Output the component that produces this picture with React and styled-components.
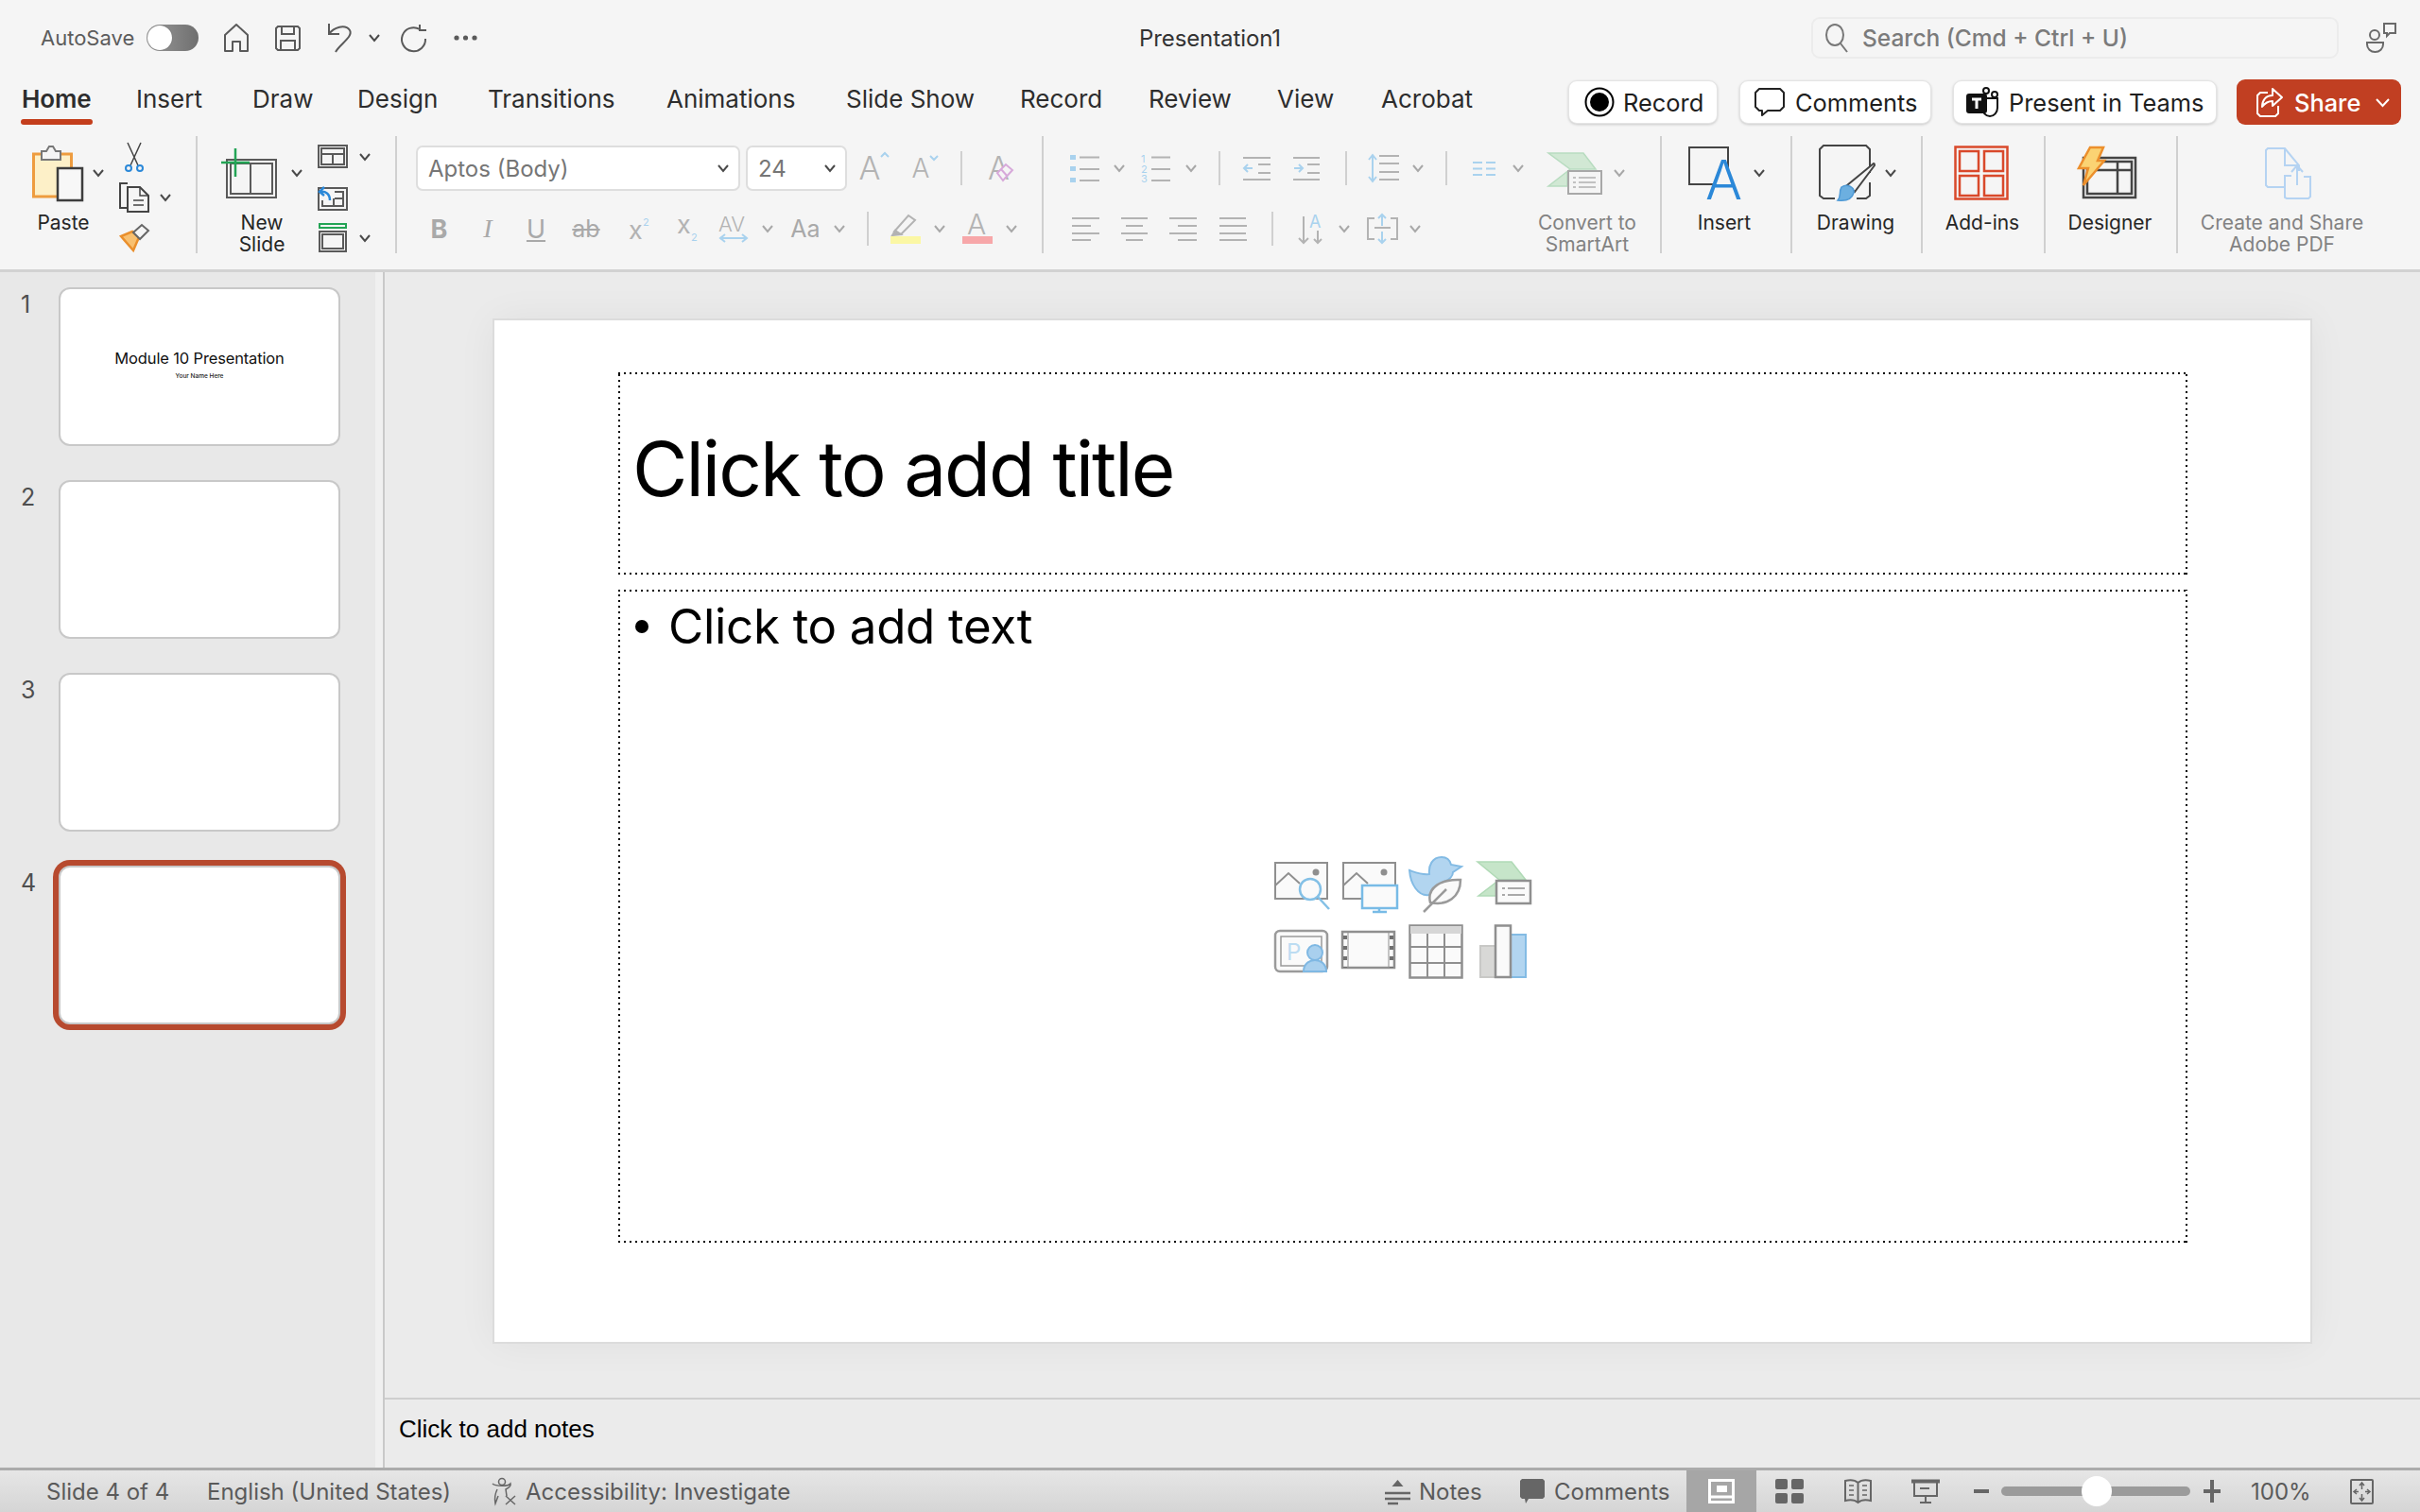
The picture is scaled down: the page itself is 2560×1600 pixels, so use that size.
import React from 'react';
import styled, { createGlobalStyle } from 'styled-components';

const GlobalStyle = createGlobalStyle`
  html, body { margin: 0; padding: 0; background: #ebebeb; }
  * { box-sizing: border-box; }
  body { font-family: Inter, "Liberation Sans", sans-serif; }
`;

const Page = styled.div`
  width: 2560px;
  height: 1600px;
  display: flex;
  flex-direction: column;
  overflow: hidden;
  background: #ebebeb;
`;

/* ---------- top bars ---------- */
const TitleBar = styled.header`
  height: 80px;
  display: grid;
  grid-template-columns: 1fr auto 1fr;
  align-items: center;
  background: #f5f5f5;
`;
const TitleLeft = styled.div`
  display: flex;
  align-items: center;
  padding-left: 43px;
`;
const TitleRight = styled.div`
  display: flex;
  align-items: center;
  justify-content: flex-end;
  padding-right: 24px;
`;
const DocName = styled.div`
  font-size: 24px;
  color: #333;
  letter-spacing: -0.1px;
`;
const AutoSaveLabel = styled.span`
  width: 100px;
  font-size: 22px;
  color: #5c5c5c;
  white-space: nowrap;
`;
const Toggle = styled.span`
  width: 55px;
  height: 28px;
  margin-left: 12px;
  border-radius: 14px;
  background: linear-gradient(90deg, #9a9a9a, #6f6f6f);
  display: flex;
  align-items: center;
  padding-left: 1px;
  &::before {
    content: '';
    width: 26px;
    height: 26px;
    border-radius: 50%;
    background: #fff;
    box-shadow: 0 0 1px #555;
  }
`;
const SearchBox = styled.div`
  width: 558px;
  height: 44px;
  display: flex;
  align-items: center;
  gap: 14px;
  padding-left: 12px;
  border: 2px solid #ececec;
  border-radius: 9px;
  font-size: 24.5px;
  font-weight: 500;
  color: #7b7b7b;
`;

const TabRow = styled.nav`
  height: 64px;
  display: flex;
  align-items: flex-start;
  padding-left: 23px;
  background: #f5f5f5;
`;
const Tab = styled.div`
  width: ${p => p.$w}px;
  flex: none;
  line-height: 50px;
  font-size: 26px;
  color: #2d2d2d;
  font-weight: ${p => (p.$active ? 600 : 400)};
  letter-spacing: ${p => (p.$active ? '-0.1px' : '0')};
  white-space: nowrap;
  &::after {
    content: '';
    display: ${p => (p.$active ? 'block' : 'none')};
    width: 76px;
    height: 6px;
    margin: -4px 0 0 -1px;
    border-radius: 3px;
    background: #c43e1c;
  }
`;
const Actions = styled.div`
  margin-left: auto;
  display: flex;
  gap: 23px;
  padding: 5px 20px 0 0;
`;
const ActionButton = styled.button`
  width: ${p => p.$w}px;
  height: 46px;
  display: flex;
  align-items: center;
  gap: ${p => p.$gap}px;
  padding: 0 0 0 ${p => p.$pl}px;
  background: #fff;
  border: 1px solid #e4e4e4;
  border-radius: 9px;
  box-shadow: 0 1px 3px rgba(0, 0, 0, 0.18);
  font: 400 25.4px Inter, sans-serif;
  color: #1e1e1e;
  white-space: nowrap;
`;
const ShareButton = styled(ActionButton)`
  height: 48px;
  margin: -1px 0 0 -2px;
  background: #c13f22;
  border: 0;
  box-shadow: none;
  color: #fff;
  font-weight: 500;
`;

/* ---------- ribbon ---------- */
const Ribbon = styled.section`
  height: 144px;
  display: flex;
  align-items: flex-start;
  background: #f5f5f5;
  border-bottom: 3px solid #d2d2d2;
`;
const Group = styled.div`
  width: ${p => p.$w}px;
  height: 124px;
  flex: none;
  display: flex;
  align-items: flex-start;
  border-right: ${p => (p.$last ? 0 : 2)}px solid #d0d0d0;
`;
const Rows = styled.div`
  display: flex;
  flex-direction: column;
  gap: 20px;
  padding-top: 10px;
  width: ${p => p.$w}px;
`;
const ToolRow = styled.div`
  height: ${p => p.$h}px;
  display: flex;
  align-items: center;
  padding-left: ${p => p.$pl || 0}px;
`;
const Slot = styled.span`
  width: ${p => p.$w}px;
  margin-left: ${p => p.$ml || 0}px;
  flex: none;
  display: flex;
  justify-content: center;
  align-items: center;
`;
const VDiv = styled.span`
  width: 2px;
  height: 36px;
  flex: none;
  margin-left: ${p => p.$ml}px;
  background: #d0d0d0;
`;
const BigTool = styled.div`
  width: ${p => p.$w}px;
  flex: none;
  margin-left: ${p => p.$ml || 0}px;
`;
const BigIcon = styled.div`
  height: 70px;
  margin-top: 4px;
  display: flex;
  align-items: center;
  padding-left: ${p => p.$pl || 0}px;
`;
const BigLabel = styled.div`
  width: ${p => p.$w}px;
  margin-top: 6px;
  font-size: 21px;
  line-height: 23px;
  text-align: center;
  white-space: nowrap;
  color: ${p => (p.$dim ? '#828282' : '#262626')};
`;
const Stack = styled.div`
  display: grid;
  grid-template-rows: repeat(3, 43px);
`;
const StackRow = styled.div`
  display: flex;
  align-items: center;
`;
const Combo = styled.div`
  width: ${p => p.$w}px;
  height: 48px;
  margin-left: ${p => p.$ml || 0}px;
  flex: none;
  display: flex;
  align-items: center;
  justify-content: space-between;
  padding: 0 10px 0 11px;
  background: #fff;
  border: 2px solid #dedede;
  border-radius: 7px;
  font-size: 24px;
  color: #767676;
`;
const FaceGlyph = styled.span`
  font-family: ${p => (p.$serif ? '"Liberation Serif", serif' : 'Inter, sans-serif')};
  font-size: ${p => p.$size || 25}px;
  font-weight: ${p => p.$weight || 400};
  font-style: ${p => (p.$italic ? 'italic' : 'normal')};
  text-decoration: ${p => p.$line || 'none'};
  color: #a9a9a9;
  line-height: 1;
`;
const ThinLetter = styled.span`
  font-size: ${p => p.$size}px;
  font-weight: 300;
  line-height: 1;
  color: #b3b3b3;
`;
const LetterTool = styled.span`
  display: flex;
  align-items: flex-start;
  gap: 1px;
`;

/* ---------- body ---------- */
const Workspace = styled.div`
  flex: 1;
  min-height: 0;
  display: flex;
`;
const SlidePane = styled.aside`
  width: 407px;
  flex: none;
  padding: 16px 0 0 22px;
  background: #e8e8e8;
  border-right: 2px solid #c9c9c9;
  box-shadow: inset -8px 0 0 #f0f0f0;
`;
const ThumbRow = styled.div`
  height: 168px;
  margin-bottom: 36px;
  display: flex;
`;
const ThumbNumber = styled.div`
  width: 40px;
  font-size: 25px;
  line-height: 30px;
  padding-top: 3px;
  color: #4f4f4f;
`;
const Thumb = styled.div`
  width: 298px;
  height: 168px;
  display: flex;
  flex-direction: column;
  align-items: center;
  justify-content: center;
  background: #fff;
  border: 2px solid #c8c8c8;
  border-radius: 12px;
  box-shadow: ${p => (p.$selected ? '0 0 0 6px #b74a2f' : 'none')};
`;
const ThumbTitle = styled.div`
  font-size: 16.5px;
  line-height: 22px;
  margin-top: -4px;
  color: #111;
  letter-spacing: -0.15px;
`;
const ThumbSub = styled.div`
  font-size: 6.5px;
  font-weight: 500;
  line-height: 12px;
  margin-top: 2px;
  color: #222;
`;
const Main = styled.main`
  flex: 1;
  min-width: 0;
  display: flex;
  flex-direction: column;
`;
const SlideArea = styled.div`
  height: 1191px;
  padding-top: 51px;
  display: flex;
  justify-content: center;
  align-items: flex-start;
`;
const SlideSheet = styled.div`
  width: 1921px;
  height: 1081px;
  display: flex;
  flex-direction: column;
  gap: 16px;
  padding: 55px 130px 0 131px;
  background: #fff;
  box-shadow: 0 0 0 2px #dcdcdc, 0 0 40px rgba(0, 0, 0, 0.06);
`;
const dots = `
  background-image:
    repeating-linear-gradient(90deg, #000 0 2px, transparent 2px 6px),
    repeating-linear-gradient(90deg, #000 0 2px, transparent 2px 6px),
    repeating-linear-gradient(0deg, #000 0 2px, transparent 2px 6px),
    repeating-linear-gradient(0deg, #000 0 2px, transparent 2px 6px);
  background-size: 100% 2px, 100% 2px, 2px 100%, 2px 100%;
  background-position: 0 0, 0 100%, 0 0, 100% 0;
  background-repeat: no-repeat;
`;
const TitleHolder = styled.div`
  height: 214px;
  display: flex;
  align-items: center;
  padding: 0 0 12px 15px;
  font-size: 80px;
  letter-spacing: -2px;
  color: #000;
  ${dots}
`;
const BodyHolder = styled.div`
  height: 691px;
  display: grid;
  ${dots}
`;
const BodyLine = styled.div`
  grid-area: 1 / 1;
  align-self: start;
  display: flex;
  align-items: center;
  gap: 21px;
  padding: 8px 0 0 18px;
  font-size: 51px;
  line-height: 62px;
  letter-spacing: -0.3px;
  color: #000;
  &::before {
    content: '';
    width: 14px;
    height: 14px;
    border-radius: 50%;
    background: #000;
  }
`;
const ContentIcons = styled.div`
  grid-area: 1 / 1;
  place-self: center;
  display: grid;
  grid-template-columns: repeat(4, 60px);
  grid-auto-rows: 60px;
  column-gap: 12px;
  row-gap: 13px;
  margin-top: 4px;
`;
const NotesBar = styled.div`
  height: 74px;
  padding: 15px 0 0 15px;
  border-top: 2px solid #cecece;
  font: 400 26px/32px "Liberation Sans", sans-serif;
  color: #000;
`;
const StatusBar = styled.footer`
  height: 47px;
  flex: none;
  display: flex;
  align-items: stretch;
  border-top: 3px solid #ababab;
  background: linear-gradient(180deg, #e6e6e6, #d5d5d5);
`;
const StatusGroup = styled.div`
  display: flex;
  align-items: center;
  margin-left: ${p => (p.$right ? 'auto' : '0')};
  padding-right: ${p => (p.$right ? 49 : 0)}px;
`;
const StatusText = styled.span`
  width: ${p => p.$w}px;
  margin-left: ${p => p.$ml}px;
  flex: none;
  font-size: 24px;
  color: #5a5a5a;
  white-space: nowrap;
`;
const ViewButton = styled.span`
  width: 74px;
  height: 44px;
  margin-left: 21px;
  flex: none;
  display: flex;
  align-items: center;
  justify-content: center;
  background: #a6a6a6;
`;
const ZoomTrack = styled.span`
  width: 200px;
  height: 10px;
  margin-left: 13px;
  flex: none;
  position: relative;
  border-radius: 5px;
  background: #9b9b9b;
`;
const ZoomKnob = styled.span`
  position: absolute;
  left: 85px;
  top: -11px;
  width: 32px;
  height: 32px;
  border-radius: 50%;
  background: #fff;
`;

/* ---------- icons ---------- */
const G = '#5a5a5a';
const LG = '#b3b3b3';
const BL = '#a9d2ee';
const svgStyle = { display: 'block', flex: 'none', overflow: 'visible' };

const Ico = ({ w, h, children, sw = 2, stroke = G }) => (
  <svg width={w} height={h} viewBox={`0 0 ${w} ${h}`} fill="none" stroke={stroke} strokeWidth={sw} style={svgStyle}>
    {children}
  </svg>
);
const Chev = ({ dim, color, ml = 0 }) => (
  <Slot $w={12} $ml={ml}>
    <Ico w={12} h={8} sw={2} stroke={color || (dim ? '#a8a8a8' : '#4a4a4a')}><path d="M1 1l5 6 5-6" /></Ico>
  </Slot>
);
const HomeIcon = () => <Ico w={28} h={30}><path d="M2 29V12L14 1l12 11v17h-8V19h-8v10z" strokeLinejoin="round" /></Ico>;
const SaveIcon = () => <Ico w={27} h={27}><path d="M3 1h21l2 2v21l-2 2H3l-2-2V3zM7 1v8h13V1M6 26V16h15v10" /></Ico>;
const UndoIcon = () => <Ico w={27} h={32}><path d="M2 1v11h11M2 12C7 5 19 1 24 8c4 7-11 15-15 23" /></Ico>;
const RedoIcon = () => <Ico w={29} h={28}><path d="M21 5A12.5 12.5 0 1 0 27 15M21 0v6h7" /></Ico>;
const DotsIcon = () => <Ico w={25} h={6} stroke="none"><g fill={G}><circle cx="3" cy="3" r="2.6" /><circle cx="12.5" cy="3" r="2.6" /><circle cx="22" cy="3" r="2.6" /></g></Ico>;
const SearchIcon = () => <Ico w={26} h={32} stroke="#777"><ellipse cx="11" cy="13" rx="9" ry="11" /><path d="M17 22l7 9" /></Ico>;
const PeopleIcon = () => (
  <Ico w={34} h={32} stroke="#6a6a6a">
    <circle cx="10" cy="13" r="5" /><path d="M2 21h17v2a8.5 8 0 0 1-17 0z" /><path d="M20 1h12v10h-6l-3 3v-3h-3z" />
  </Ico>
);
const RecordIcon = () => <Ico w={32} h={32} stroke="#000"><circle cx="16" cy="16" r="14.5" /><circle cx="16" cy="16" r="9" fill="#000" /></Ico>;
const BubbleIcon = () => <Ico w={32} h={30} stroke="#222"><path d="M5 1h22l4 4v15l-4 4H14l-6 5v-5H5l-4-4V5z" strokeLinejoin="round" /></Ico>;
const TeamsIcon = () => (
  <Ico w={34} h={32} stroke="#111">
    <circle cx="20" cy="4" r="3" /><circle cx="29" cy="8" r="3" />
    <path d="M16 12h16v10a8 9 0 0 1-16 0z" fill="#fff" />
    <rect x="0" y="8" width="20" height="19" rx="2" fill="#111" />
    <path d="M5 13h10M10 13v10" stroke="#fff" strokeWidth="3" />
  </Ico>
);
const ShareIcon = () => (
  <Ico w={30} h={32} stroke="#fff"><path d="M13 6H5L2 9v19l3 3h16l3-3v-8" /><path d="M18 2l10 9-10 9v-5c-5 0-8 2-11 6 0-7 4-12 11-12z" strokeLinejoin="round" /></Ico>
);
const PasteIcon = () => (
  <Ico w={54} h={60}>
    <rect x="1.5" y="10" width="40" height="45" fill="#fdf0c8" stroke="#ee9c3f" strokeWidth="3" />
    <path d="M10 16V7h5l3-5h4l3 5h5v9z" fill="#f5f5f5" stroke="#777" />
    <rect x="27" y="25" width="26" height="34" fill="#f7f7f7" stroke="#3d3d3d" strokeWidth="2.5" />
  </Ico>
);
const ScissorsIcon = () => (
  <Ico w={20} h={32} stroke="#444"><path d="M3 1l11 24M17 1L6 25" strokeWidth="1.5" /><circle cx="4" cy="28" r="3" stroke="#2b88d8" /><circle cx="16" cy="28" r="3" stroke="#2b88d8" /></Ico>
);
const CopyIcon = () => (
  <Ico w={32} h={32} stroke="#444"><path d="M9 1H1v26h8" /><path d="M9 5h13l9 9v17H9z" fill="#f5f5f5" /><path d="M22 5v9h9M15 19h11M15 24h11" strokeWidth="1.5" /></Ico>
);
const BrushIcon = () => (
  <Ico w={31} h={29} stroke="#666"><path d="M1 13l13 15 6-14-7-6z" fill="#f8c070" stroke="#ea8f2c" strokeWidth="2.5" /><path d="M14 9l9-8 7 6-9 9z" fill="#f5f5f5" /></Ico>
);
const NewSlideIcon = () => (
  <Ico w={59} h={53} stroke="#5a5a5a">
    <rect x="6" y="12" width="52" height="40" /><rect x="10" y="16" width="44" height="32" /><path d="M31 16v32" />
    <path d="M15 0v30M0 15h30" stroke="#23a455" strokeWidth="2.5" />
  </Ico>
);
const LayoutIcon = () => <Ico w={32} h={25}><rect x="1" y="1" width="30" height="23" /><rect x="4" y="4" width="24" height="17" /><path d="M4 10h24M16 10v11" /></Ico>;
const ResetIcon = () => (
  <Ico w={32} h={28}><path d="M1 4h30v23H1z" /><path d="M18 8h9v15H5v-6M18 15h9M17 15v8" /><path d="M13 17C13 10 8 7 3 8M7 3L2 8l5 4" stroke="#2b88d8" fill="none" strokeWidth="2.5" /></Ico>
);
const SectionIcon = () => <Ico w={30} h={31}><rect x="1" y="1" width="28" height="4" stroke="#23a455" /><rect x="1" y="9" width="28" height="21" /><rect x="4" y="12" width="22" height="15" /></Ico>;

const GrowIcon = () => (
  <LetterTool><ThinLetter $size={34}>A</ThinLetter><Ico w={8} h={6} stroke={BL}><path d="M0 5l4-4 4 4" /></Ico></LetterTool>
);
const ShrinkIcon = () => (
  <LetterTool><ThinLetter $size={28}>A</ThinLetter><Ico w={8} h={6} stroke={BL}><path d="M0 1l4 4 4-4" /></Ico></LetterTool>
);
const ClearIcon = () => (
  <LetterTool>
    <ThinLetter $size={34}>A</ThinLetter>
    <Ico w={2} h={32} stroke="#d7a9da" sw={2}><path d="M-14 22l9-9 7 6-10 11zM-10 18l7 8" fill="#f5f5f5" /></Ico>
  </LetterTool>
);
const SuperIcon = () => <Ico w={22} h={26} stroke="none"><text x="0" y="24" fontSize="27" fill={LG} fontFamily="Inter, sans-serif">x</text><text x="15" y="10" fontSize="11" fill={BL} fontFamily="Inter, sans-serif">2</text></Ico>;
const SubIcon = () => <Ico w={23} h={30} stroke="none"><text x="0" y="20" fontSize="27" fill={LG} fontFamily="Inter, sans-serif">x</text><text x="15" y="28" fontSize="11" fill={BL} fontFamily="Inter, sans-serif">2</text></Ico>;
const SpacingIcon = () => (
  <Ico w={32} h={32} stroke={BL}><text x="0" y="19" fontSize="22" fontWeight="300" fill={LG} stroke="none" fontFamily="Inter, sans-serif">AV</text><path d="M2 26h28M7 22l-5 4 5 4M25 22l5 4-5 4" /></Ico>
);
const HighlightIcon = () => (
  <Ico w={32} h={32} stroke={LG}>
    <path d="M4 19L19 2l7 5-15 15z" fill="#f5f5f5" /><path d="M2 23l3-5 6 4z" fill={LG} />
    <rect x="0" y="24" width="32" height="8" fill="#fbf7a4" stroke="none" />
  </Ico>
);
const FontColorIcon = () => (
  <Ico w={32} h={32} stroke="none">
    <text x="5" y="22" fontSize="30" fontWeight="300" fontFamily="Inter, sans-serif" fill={LG}>A</text>
    <rect y="24" width="32" height="8" fill="#f7a7a9" />
  </Ico>
);
const lines = (ys, x1, x2) => ys.map(y => `M${x1} ${y}H${x2}`).join('');
const BulletIcon = () => (
  <Ico w={31} h={29} stroke={LG}><path d={lines([2.5, 15, 27], 10, 31)} /><g fill={BL} stroke="none"><rect y="0" width="6" height="5" /><rect y="12" width="6" height="5" /><rect y="24" width="6" height="5" /></g></Ico>
);
const NumberIcon = () => (
  <Ico w={31} h={29} stroke={LG}><path d={lines([2.5, 15, 27], 11, 31)} /><g fill={BL} stroke="none" fontSize="11" fontFamily="Inter, sans-serif"><text x="0" y="8">1</text><text x="0" y="19">2</text><text x="0" y="29">3</text></g></Ico>
);
const OutdentIcon = () => <Ico w={29} h={27} stroke={LG}><path d={`M0 2H29M0 25H29${lines([9, 18], 16, 29)}`} /><path d="M10 13H1M5 9l-4 4 4 4" stroke={BL} /></Ico>;
const IndentIcon = () => <Ico w={28} h={27} stroke={LG}><path d={`M0 2H28M0 25H28${lines([9, 18], 15, 28)}`} /><path d="M1 13h9M6 9l4 4-4 4" stroke={BL} /></Ico>;
const LineSpaceIcon = () => (
  <Ico w={32} h={30} stroke={LG}><path d={lines([2, 10, 19, 27], 11, 32)} /><path d="M4 2v26M0 6l4-5 4 5M0 24l4 5 4-5" stroke={BL} /></Ico>
);
const ColumnsIcon = () => <Ico w={24} h={17} stroke={BL}><path d={lines([2, 8.5, 15], 0, 10) + lines([2, 8.5, 15], 14, 24)} /></Ico>;
const AlignIcon = ({ w = 29, mode }) => {
  const short = mode === 'left' ? [0, 20] : mode === 'right' ? [9, 29] : mode === 'center' ? [5, 23] : [0, 29];
  return <Ico w={w} h={26} stroke={LG}><path d={lines([2, 18], 0, w) + lines([10, 25], short[0], short[1])} /></Ico>;
};
const TextDirIcon = () => (
  <Ico w={27} h={33} stroke={LG}><path d="M6 3v28M1 26l5 5 5-5M21 18v13M17 27l4 4 4-4" /><text x="12" y="15" fontSize="18" fill={BL} stroke="none" fontFamily="Inter, sans-serif">A</text></Ico>
);
const AlignTextIcon = () => (
  <Ico w={33} h={32} stroke={LG}><path d="M8 5H1v22h7M25 5h7v22h-7M8 15h17" /><path d="M16 1v12M12 5l4-4 4 4M16 19v12M12 27l4 4 4-4" stroke={BL} /></Ico>
);
const SmartArtIcon = () => (
  <svg width={57} height={44} viewBox="0 0 57 44" style={svgStyle}>
    <path d="M1 1h37l13 17H24zM24 18L1 36h20v-14z" fill="#d1e8d4" stroke="#b8dcc0" strokeWidth="1.5" />
    <rect x="22" y="20" width="35" height="24" fill="#f5f5f5" stroke="#a8a8a8" strokeWidth="2" />
    <path d="M27 27h3M33 27h18M27 32h3M33 32h18M27 37h3M33 37h18" stroke="#b0b0b0" strokeWidth="1.5" />
  </svg>
);
const InsertIcon = () => (
  <Ico w={56} h={56} stroke="#444">
    <path d="M42 26V1H1v39h26" />
    <text x="18" y="56" fontSize="58" fontWeight="300" fontFamily="Inter, sans-serif" fill="#2b88d8" stroke="none">A</text>
  </Ico>
);
const DrawingIcon = () => (
  <Ico w={60} h={60} stroke="#444">
    <path d="M54 30V5l-4-4H5L1 5v49l4 3h12M40 57h10l4-3V40" />
    <path d="M30 43L58 20c1 0 1 1 1 2L38 50z" fill="#f5f5f5" />
    <path d="M24 45c6-4 14 0 13 6-2 7-9 9-17 8 4-4 1-9 4-14z" fill="#6cafe0" stroke="#4f9ad6" strokeWidth="1.5" />
  </Ico>
);
const AddinsIcon = () => (
  <Ico w={58} h={58} stroke="#d9492b" sw={2.5}>
    <rect x="1.5" y="1.5" width="55" height="55" /><rect x="6" y="6" width="20" height="21" /><rect x="32" y="6" width="20" height="21" /><rect x="6" y="32" width="20" height="21" /><rect x="32" y="32" width="20" height="21" />
  </Ico>
);
const DesignerIcon = () => (
  <Ico w={61} h={54} stroke="#444" sw={2.5}>
    <rect x="5" y="11" width="55" height="42" /><rect x="9" y="15" width="47" height="34" /><path d="M41 15v34M12 24h44" />
    <path d="M12 0h14l-6 14h7L5 40l5-18H0z" fill="#fbd373" stroke="#ec8f2c" strokeWidth="2.5" />
  </Ico>
);
const PdfIcon = () => (
  <Ico w={49} h={55} stroke="#b5d3f2">
    <path d="M22 42H3l-2-2V3l2-2h18l15 18v6" /><path d="M21 1v18h15" />
    <path d="M28 30H21v23l2 1h23l2-2V31h-7M34 40V20M28 26l6-7 6 7" />
  </Ico>
);
const A11yIcon = () => (
  <Ico w={30} h={30} stroke="#666" sw={1.5}>
    <circle cx="13" cy="5" r="3.5" /><path d="M3 7c3 3 17 3 19 0 1 3-3 5-5 6l1 7M8 13c-2 4-3 10-2 15l3-8" /><path d="M17 20l10 9M27 20l-10 9" />
  </Ico>
);
const NotesIcon = () => <Ico w={27} h={27} stroke="#666" sw={2.5}><path d="M0 15H27M0 21H27M3 26H14" /><path d="M13.5 1l6 7h-12z" fill="#666" stroke="none" /></Ico>;
const SolidBubble = () => <Ico w={26} h={26} stroke="none"><path d="M2 0h22l2 2v17l-2 2H9l-3 5-1-5H2l-2-2V2z" fill="#666" /></Ico>;
const NormalIcon = () => (
  <Ico w={28} h={26} stroke="#fff" sw={3}><rect x="1.5" y="1.5" width="25" height="23" /><rect x="9" y="7" width="11" height="7" fill="#fff" stroke="none" /><path d="M2 19h24" /></Ico>
);
const SorterIcon = () => (
  <Ico w={30} h={26} stroke="none"><g fill="#666"><rect width="13" height="11" rx="2" /><rect x="17" width="13" height="11" rx="2" /><rect y="15" width="13" height="11" rx="2" /><rect x="17" y="15" width="13" height="11" rx="2" /></g></Ico>
);
const ReadingIcon = () => (
  <Ico w={29} h={26} stroke="#666" sw={2}><path d="M14.5 4C11 1 5 1 1 2v21c4-1 10-1 13.5 2 3.5-3 9.5-3 13.5-2V2c-4-1-10-1-13.5 2zM14.5 4v21" /><path d="M5 7h5M5 12h5M5 17h5M19 7h5M19 12h5M19 17h5" strokeWidth="1.5" /></Ico>
);
const ShowIcon = () => (
  <Ico w={30} h={26} stroke="#666" sw={2}><path d="M0 2.5h30" strokeWidth="4" /><path d="M3 3v15h24V3M15 18v6M9 25h12M9 10h10" /></Ico>
);
const MinusIcon = () => <Ico w={16} h={6} stroke="#666" sw={4}><path d="M0 3h16" /></Ico>;
const PlusIcon = () => <Ico w={18} h={24} stroke="#666" sw={4}><path d="M0 12h18M9 0v24" /></Ico>;
const FitIcon = () => (
  <Ico w={25} h={27} stroke="#666" sw={2}><rect x="1" y="1" width="23" height="25" rx="1" /><path d="M12.5 5v6M10 7l2.5-3L15 7M12.5 16v6M10 20l2.5 3 2.5-3M4 13.5h5M7 11l-3 2.5L7 16M16 13.5h5M18 11l3 2.5L18 16" strokeWidth="1.5" /></Ico>
);

/* placeholder icons in the content box */
const PictureBase = () => (
  <>
    <rect x="3" y="8" width="55" height="38" fill="#fafafa" stroke="#8f8f8f" strokeWidth="2" />
    <path d="M3 32l14-13 12 11" stroke="#8f8f8f" strokeWidth="2" fill="none" />
    <circle cx="46" cy="18" r="3.5" fill="#8f8f8f" stroke="none" />
  </>
);
const PhIcon = ({ children }) => <svg width="60" height="60" viewBox="0 0 60 60" fill="none" style={svgStyle}>{children}</svg>;
const StockIcon = () => (
  <PhIcon><PictureBase /><circle cx="40" cy="36" r="11" fill="#fafafa" stroke="#83c0e6" strokeWidth="2.5" /><path d="M48 44l12 13" stroke="#83c0e6" strokeWidth="2.5" /></PhIcon>
);
const OnlinePicIcon = () => (
  <PhIcon><PictureBase /><rect x="23" y="32" width="37" height="24" fill="#fafafa" stroke="#78bbe6" strokeWidth="2.5" /><path d="M41 56v4M34 60h15" stroke="#78bbe6" strokeWidth="2.5" /></PhIcon>
);
const ElementsIcon = () => (
  <PhIcon>
    <path d="M1 16c6 2 13 5 21 4-1-9 3-18 13-18 6 0 9 4 10 8l11 2-9 6c0 4-4 8-9 10-9 3-10 12-16 14C10 44 2 30 1 16z" fill="#b2d5f0" stroke="#83bbe4" strokeWidth="2" />
    <path d="M23 50c-4-16 12-25 32-24 0 18-14 28-32 24z" fill="#fafafa" stroke="#9a9a9a" strokeWidth="2.5" />
    <path d="M16 60l24-24" stroke="#9a9a9a" strokeWidth="2.5" />
  </PhIcon>
);
const PhSmartArt = () => (
  <PhIcon>
    <path d="M1 7h36l15 19H24zM24 26L2 43h20V29z" fill="#c6e5c9" stroke="#b0dab6" strokeWidth="1.5" />
    <rect x="21" y="27" width="36" height="24" fill="#fafafa" stroke="#8f8f8f" strokeWidth="2.5" />
    <path d="M27 35h3M33 35h18M27 42h3M33 42h18" stroke="#8f8f8f" strokeWidth="1.5" />
  </PhIcon>
);
const CameoIcon = () => (
  <PhIcon>
    <rect x="3" y="7" width="55" height="43" rx="5" fill="#fafafa" stroke="#9a9a9a" strokeWidth="2.5" />
    <rect x="9" y="13" width="43" height="31" stroke="#9a9a9a" strokeWidth="1.5" />
    <text x="15" y="38" fontSize="24" fontFamily="Inter, sans-serif" fill="#bcdcf2">P</text>
    <circle cx="45" cy="30" r="8" fill="#a9d0ee" stroke="#7fb8e3" strokeWidth="2" />
    <path d="M33 50c0-16 24-16 24 0z" fill="#a9d0ee" stroke="#7fb8e3" strokeWidth="2" />
  </PhIcon>
);
const VideoIcon = () => (
  <PhIcon>
    <rect x="2" y="8" width="55" height="38" fill="#fafafa" stroke="#8f8f8f" strokeWidth="2.5" />
    <path d="M8 8v38M51 8v38" stroke="#8f8f8f" strokeWidth="1" />
    <path d="M5 12v34M54 12v34" stroke="#707070" strokeWidth="4" strokeDasharray="4 7" />
  </PhIcon>
);
const TableIcon = () => (
  <PhIcon>
    <rect x="1.5" y="1.5" width="55" height="55" fill="#fafafa" stroke="#8f8f8f" strokeWidth="2.5" />
    <rect x="2" y="2" width="54" height="8" fill="#d6d6d6" />
    <path d="M20 10v46M38 10v46M2 24h54M2 41h54" stroke="#8f8f8f" strokeWidth="2" />
  </PhIcon>
);
const ChartIcon = () => (
  <PhIcon>
    <rect x="36" y="11" width="16" height="45" fill="#b2d5f0" stroke="#83bbe4" strokeWidth="2" />
    <rect x="4" y="23" width="16" height="33" fill="#d8d8d6" stroke="#c8c8c6" strokeWidth="2" />
    <rect x="20" y="1.5" width="16" height="54.5" fill="#fafafa" stroke="#8f8f8f" strokeWidth="2.5" />
  </PhIcon>
);

const tabs = [
  ['Home', 121], ['Insert', 123], ['Draw', 111], ['Design', 138], ['Transitions', 189], ['Animations', 190],
  ['Slide Show', 184], ['Record', 136], ['Review', 136], ['View', 110], ['Acrobat', 110],
];

const thumbs = [1, 2, 3, 4];

const App = () => (
  <Page>
    <GlobalStyle />
    <TitleBar>
      <TitleLeft>
        <AutoSaveLabel>AutoSave</AutoSaveLabel>
        <Toggle />
        <Slot $w={28} $ml={26}><HomeIcon /></Slot>
        <Slot $w={27} $ml={27}><SaveIcon /></Slot>
        <Slot $w={27} $ml={28}><UndoIcon /></Slot>
        <Chev ml={17} />
        <Slot $w={29} $ml={21}><RedoIcon /></Slot>
        <Slot $w={25} $ml={28}><DotsIcon /></Slot>
      </TitleLeft>
      <DocName>Presentation1</DocName>
      <TitleRight>
        <SearchBox><SearchIcon />Search (Cmd + Ctrl + U)</SearchBox>
        <Slot $w={34} $ml={28}><PeopleIcon /></Slot>
      </TitleRight>
    </TitleBar>

    <TabRow>
      {tabs.map(([name, w], i) => <Tab key={name} $w={w} $active={i === 0}>{name}</Tab>)}
      <Actions>
        <ActionButton $w={158} $pl={16} $gap={9}><RecordIcon />Record</ActionButton>
        <ActionButton $w={203} $pl={15} $gap={11}><BubbleIcon />Comments</ActionButton>
        <ActionButton $w={279} $pl={14} $gap={10}><TeamsIcon />Present in Teams</ActionButton>
        <ShareButton $w={174} $pl={20} $gap={11}>
          <ShareIcon />Share
          <Slot $w={15} $ml={5}><Ico w={15} h={9} stroke="#fff"><path d="M1 1l6.5 7L14 1" /></Ico></Slot>
        </ShareButton>
      </Actions>
    </TabRow>

    <Ribbon>
      <Group $w={209}>
        <BigTool $w={92} $ml={34}>
          <BigIcon><PasteIcon /><Chev ml={10} /></BigIcon>
          <BigLabel $w={66}>Paste</BigLabel>
        </BigTool>
        <Stack>
          <StackRow><Slot $w={32}><ScissorsIcon /></Slot></StackRow>
          <StackRow><Slot $w={32}><CopyIcon /></Slot><Chev ml={11} /></StackRow>
          <StackRow><Slot $w={32}><BrushIcon /></Slot></StackRow>
        </Stack>
      </Group>

      <Group $w={211}>
        <BigTool $w={102} $ml={25}>
          <BigIcon><NewSlideIcon /><Chev ml={15} /></BigIcon>
          <BigLabel $w={86}>New<br />Slide</BigLabel>
        </BigTool>
        <Stack>
          <StackRow><Slot $w={32}><LayoutIcon /></Slot><Chev ml={12} /></StackRow>
          <StackRow><Slot $w={32}><ResetIcon /></Slot></StackRow>
          <StackRow><Slot $w={32}><SectionIcon /></Slot><Chev ml={12} /></StackRow>
        </Stack>
      </Group>

      <Group $w={684}>
        <Rows>
          <ToolRow $h={48} $pl={20}>
            <Combo $w={343}>Aptos (Body)<Chev /></Combo>
            <Combo $w={107} $ml={6}>24<Chev /></Combo>
            <Slot $w={31} $ml={13}><GrowIcon /></Slot>
            <Slot $w={27} $ml={25}><ShrinkIcon /></Slot>
            <VDiv $ml={24} />
            <Slot $w={32} $ml={24}><ClearIcon /></Slot>
          </ToolRow>
          <ToolRow $h={40} $pl={20}>
            <Slot $w={17} $ml={16}><FaceGlyph $weight={700} $size={27}>B</FaceGlyph></Slot>
            <Slot $w={12} $ml={37}><FaceGlyph $serif $italic $size={28}>I</FaceGlyph></Slot>
            <Slot $w={18} $ml={36}><FaceGlyph $size={27} $line="underline">U</FaceGlyph></Slot>
            <Slot $w={32} $ml={28}><FaceGlyph $size={25} $line="line-through">ab</FaceGlyph></Slot>
            <Slot $w={22} $ml={29}><SuperIcon /></Slot>
            <Slot $w={23} $ml={29}><SubIcon /></Slot>
            <Slot $w={32} $ml={21}><SpacingIcon /></Slot>
            <Chev dim ml={14} />
            <Slot $w={32} $ml={18}><FaceGlyph $size={25}>Aa</FaceGlyph></Slot>
            <Chev dim ml={14} />
            <VDiv $ml={23} />
            <Slot $w={32} $ml={23}><HighlightIcon /></Slot>
            <Chev dim ml={14} />
            <Slot $w={32} $ml={18}><FontColorIcon /></Slot>
            <Chev dim ml={14} />
          </ToolRow>
        </Rows>
      </Group>

      <Group $w={654}>
        <Rows $w={516}>
          <ToolRow $h={48}>
            <Slot $w={31} $ml={28}><BulletIcon /></Slot>
            <Chev dim ml={15} />
            <Slot $w={31} $ml={17}><NumberIcon /></Slot>
            <Chev dim ml={16} />
            <VDiv $ml={23} />
            <Slot $w={29} $ml={24}><OutdentIcon /></Slot>
            <Slot $w={28} $ml={24}><IndentIcon /></Slot>
            <VDiv $ml={27} />
            <Slot $w={32} $ml={23}><LineSpaceIcon /></Slot>
            <Chev dim ml={14} />
            <VDiv $ml={23} />
            <Slot $w={24} $ml={27}><ColumnsIcon /></Slot>
            <Chev dim ml={18} />
          </ToolRow>
          <ToolRow $h={40}>
            <Slot $w={29} $ml={30}><AlignIcon mode="left" /></Slot>
            <Slot $w={28} $ml={23}><AlignIcon w={28} mode="center" /></Slot>
            <Slot $w={29} $ml={23}><AlignIcon mode="right" /></Slot>
            <Slot $w={28} $ml={24}><AlignIcon w={28} mode="full" /></Slot>
            <VDiv $ml={27} />
            <Slot $w={27} $ml={26}><TextDirIcon /></Slot>
            <Chev dim ml={16} />
            <Slot $w={33} $ml={18}><AlignTextIcon /></Slot>
            <Chev dim ml={12} />
          </ToolRow>
        </Rows>
        <BigTool $w={118}>
          <BigIcon $pl={17}><SmartArtIcon /><Chev dim ml={13} /></BigIcon>
          <BigLabel $w={118} $dim>Convert to<br />SmartArt</BigLabel>
        </BigTool>
      </Group>

      <Group $w={138}>
        <BigTool $w={136}>
          <BigIcon $pl={28}><InsertIcon /><Chev ml={13} /></BigIcon>
          <BigLabel $w={132}>Insert</BigLabel>
        </BigTool>
      </Group>
      <Group $w={138}>
        <BigTool $w={136}>
          <BigIcon $pl={28}><DrawingIcon /><Chev ml={10} /></BigIcon>
          <BigLabel $w={134}>Drawing</BigLabel>
        </BigTool>
      </Group>
      <Group $w={130}>
        <BigTool $w={128}>
          <BigIcon $pl={33}><AddinsIcon /></BigIcon>
          <BigLabel $w={126}>Add-ins</BigLabel>
        </BigTool>
      </Group>
      <Group $w={140}>
        <BigTool $w={138}>
          <BigIcon $pl={35}><DesignerIcon /></BigIcon>
          <BigLabel $w={136}>Designer</BigLabel>
        </BigTool>
      </Group>
      <Group $w={256} $last>
        <BigTool $w={250}>
          <BigIcon $pl={92}><PdfIcon /></BigIcon>
          <BigLabel $w={220} $dim>Create and Share<br />Adobe PDF</BigLabel>
        </BigTool>
      </Group>
    </Ribbon>

    <Workspace>
      <SlidePane>
        {thumbs.map(n => (
          <ThumbRow key={n}>
            <ThumbNumber>{n}</ThumbNumber>
            <Thumb $selected={n === 4}>
              {n === 1 && <ThumbTitle>Module 10 Presentation</ThumbTitle>}
              {n === 1 && <ThumbSub>Your Name Here</ThumbSub>}
            </Thumb>
          </ThumbRow>
        ))}
      </SlidePane>
      <Main>
        <SlideArea>
          <SlideSheet>
            <TitleHolder>Click to add title</TitleHolder>
            <BodyHolder>
              <BodyLine>Click to add text</BodyLine>
              <ContentIcons>
                <StockIcon /><OnlinePicIcon /><ElementsIcon /><PhSmartArt />
                <CameoIcon /><VideoIcon /><TableIcon /><ChartIcon />
              </ContentIcons>
            </BodyHolder>
          </SlideSheet>
        </SlideArea>
        <NotesBar>Click to add notes</NotesBar>
      </Main>
    </Workspace>

    <StatusBar>
      <StatusGroup>
        <StatusText $w={128} $ml={49}>Slide 4 of 4</StatusText>
        <StatusText $w={257} $ml={42}>English (United States)</StatusText>
        <Slot $w={30} $ml={42}><A11yIcon /></Slot>
        <StatusText $w={276} $ml={8}>Accessibility: Investigate</StatusText>
      </StatusGroup>
      <StatusGroup $right>
        <Slot $w={27}><NotesIcon /></Slot>
        <StatusText $w={65} $ml={9}>Notes</StatusText>
        <Slot $w={26} $ml={42}><SolidBubble /></Slot>
        <StatusText $w={119} $ml={10}>Comments</StatusText>
        <ViewButton><NormalIcon /></ViewButton>
        <Slot $w={30} $ml={20}><SorterIcon /></Slot>
        <Slot $w={29} $ml={43}><ReadingIcon /></Slot>
        <Slot $w={30} $ml={42}><ShowIcon /></Slot>
        <Slot $w={16} $ml={36}><MinusIcon /></Slot>
        <ZoomTrack><ZoomKnob /></ZoomTrack>
        <Slot $w={18} $ml={14}><PlusIcon /></Slot>
        <StatusText $w={65} $ml={32}>100%</StatusText>
        <Slot $w={25} $ml={40}><FitIcon /></Slot>
      </StatusGroup>
    </StatusBar>
  </Page>
);

export default App;
